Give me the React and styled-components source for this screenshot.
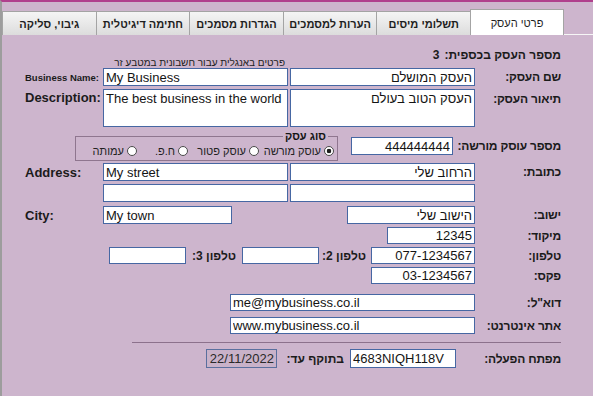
import React from 'react';
import styled, { createGlobalStyle } from 'styled-components';

const GlobalStyle = createGlobalStyle`
  html, body {
    margin: 0;
    padding: 0;
    background: #cdb5cd;
  }
  body {
    font-family: "Liberation Sans", "DejaVu Sans", Arial, sans-serif;
  }
  #root {
    width: 593px;
    height: 396px;
    overflow: hidden;
  }
`;

const Window = styled.div`
  box-sizing: border-box;
  width: 593px;
  height: 396px;
  border-top: 2px solid #b0408d;
  border-left: 2px solid #9d9d9d;
  background: #cdb5cd;
  direction: rtl;
`;

const TabBar = styled.div`
  display: flex;
  align-items: flex-end;
  height: 33px;
  padding: 0 29px 0 1px;
  box-shadow: inset 0 -1px 0 #f6f6f6;
`;

const Tab = styled.div`
  box-sizing: border-box;
  display: flex;
  align-items: center;
  justify-content: center;
  height: ${p => (p.$active ? 26 : 24)}px;
  flex: ${p => (p.$active ? '0 0 94px' : '1 1 0')};
  border: 1px solid #a4a4a4;
  border-bottom: none;
  margin-left: -1px;
  background: ${p => (p.$active ? '#fff' : 'linear-gradient(#f5f5f5, #dcdcdc)')};
  font-size: 11px;
  font-weight: ${p => (p.$active ? 'normal' : 'bold')};
  color: #1e1e1e;
  white-space: nowrap;
  padding-top: ${p => (p.$active ? 0 : 1)}px;
`;

const Panel = styled.div`
  display: flex;
  flex-direction: column;
  padding: 12px 32px 0 0;
`;

const Row = styled.div`
  display: grid;
  grid-template-columns: 84px 185px 185px 78px;
  column-gap: 2px;
  align-items: center;
  margin-top: ${p => p.$mt || 0}px;
  height: ${p => (p.$h ? `${p.$h}px` : 'auto')};
`;

const Span = styled.div`
  grid-column: ${p => p.$from} / -1;
  align-self: stretch;
  display: flex;
  align-items: center;
`;

const Label = styled.div`
  font-size: 12px;
  font-weight: bold;
  letter-spacing: -0.2px;
  color: #1b1b1b;
  white-space: nowrap;
  text-align: right;
  align-self: ${p => (p.$top ? 'start' : 'center')};
  padding-top: ${p => (p.$top ? 3 : 0)}px;
`;

const InlineLabel = styled.div`
  font-size: 12px;
  font-weight: bold;
  color: #1b1b1b;
  white-space: nowrap;
  margin-right: ${p => p.$before || 0}px;
  margin-left: ${p => p.$after || 0}px;
`;

const EnLabel = styled.div`
  direction: ltr;
  text-align: left;
  padding-left: 2px;
  font-size: ${p => p.$size || 13}px;
  font-weight: bold;
  color: #1b1b1b;
  white-space: nowrap;
  align-self: ${p => (p.$top ? 'start' : 'center')};
  padding-top: ${p => (p.$top ? 1 : 0)}px;
`;

const TextBox = styled.input`
  box-sizing: border-box;
  flex: none;
  width: ${p => p.$w || 185}px;
  height: ${p => p.$h || 18}px;
  margin: 0 ${p => p.$before || 0}px 0 0;
  padding: 0 2px;
  border: 1px solid #4667a3;
  background: #fff;
  font-family: "Liberation Sans", "DejaVu Sans", Arial, sans-serif;
  font-size: 13px;
  color: #141414;
  direction: ${p => (p.$ltr ? 'ltr' : 'rtl')};
  justify-self: ${p => (p.$ltr ? 'end' : 'start')};
  outline: none;
`;

const TextArea = styled.textarea`
  box-sizing: border-box;
  width: 185px;
  height: 38px;
  margin: 0;
  padding: 1px 2px;
  border: 1px solid #4667a3;
  background: #fff;
  font-family: "Liberation Sans", "DejaVu Sans", Arial, sans-serif;
  font-size: 13px;
  line-height: 15px;
  color: #141414;
  resize: none;
  overflow: hidden;
  direction: ${p => (p.$ltr ? 'ltr' : 'rtl')};
  outline: none;
`;

const HeadLabel = styled.div`
  grid-column: 1 / 3;
  align-self: start;
  display: flex;
  gap: 5px;
  padding-top: 1px;
  font-size: 12px;
  font-weight: bold;
  color: #1b1b1b;
  white-space: nowrap;
`;

const Note = styled.div`
  grid-column: 3;
  align-self: end;
  justify-self: start;
  padding-right: 3px;
  font-size: 10px;
  color: #222;
  white-space: nowrap;
`;

const TypeBox = styled.fieldset`
  box-sizing: border-box;
  display: flex;
  align-items: center;
  flex: none;
  width: 263px;
  height: 30px;
  margin: 0 13px 0 0;
  padding: 0 3px 1px 0;
  min-width: 0;
  border: 1px solid #8f768f;
`;

const Legend = styled.legend`
  margin-right: 6px;
  padding: 0 2px;
  font-size: 11px;
  line-height: 11px;
  font-weight: bold;
  color: #151515;
`;

const RadioItem = styled.div`
  display: flex;
  align-items: center;
  gap: 3px;
  width: ${p => (p.$w ? `${p.$w}px` : 'auto')};
  flex: none;
  font-size: 11px;
  color: #222;
  white-space: nowrap;
`;

const RadioDot = styled.span`
  box-sizing: border-box;
  width: 10px;
  height: 10px;
  border-radius: 50%;
  border: 1px solid #4a4a4a;
  background: ${p =>
    p.$on ? 'radial-gradient(circle, #1e1e1e 0 2px, #fff 2.6px)' : '#fff'};
`;

const Divider = styled.div`
  align-self: flex-start;
  width: 429px;
  height: 1px;
  margin-top: 8px;
  background: #8c718c;
`;

const DateBox = styled.div`
  box-sizing: border-box;
  flex: none;
  width: 71px;
  height: 19px;
  display: flex;
  align-items: center;
  justify-content: center;
  border: 1px solid #5a6f9e;
  background: #c9b2c9;
  font-size: 13px;
  color: #2a2a2a;
  direction: ltr;
`;

const tabs = ['פרטי העסק', 'תשלומי מיסים', 'הערות למסמכים', 'הגדרות מסמכים', 'חתימה דיגיטלית', 'גיבוי, סליקה'];

const radios = [
  { text: 'עוסק מורשה', w: 75, on: true },
  { text: 'עוסק פטור', w: 71 },
  { text: 'ח.פ.', w: 51 },
  { text: 'עמותה' },
];

const App = () => (
  <>
    <GlobalStyle />
    <Window>
      <TabBar>
        {tabs.map((t, i) => (
          <Tab key={t} $active={i === 0}>{t}</Tab>
        ))}
      </TabBar>

      <Panel>
        <Row $h={21}>
          <HeadLabel>
            <span>מספר העסק בכספית:</span>
            <span>3</span>
          </HeadLabel>
          <Note>פרטים באנגלית עבור חשבונית במטבע זר</Note>
        </Row>

        <Row>
          <Label>שם העסק:</Label>
          <TextBox readOnly value="העסק המושלם" />
          <TextBox $ltr readOnly value="My Business" />
          <EnLabel $size={9.5}>Business Name:</EnLabel>
        </Row>

        <Row $mt={3}>
          <Label $top>תיאור העסק:</Label>
          <TextArea readOnly value="העסק הטוב בעולם" />
          <TextArea $ltr readOnly value="The best business in the world" />
          <EnLabel $top>Description:</EnLabel>
        </Row>

        <Row $mt={4} $h={29}>
          <Label>מספר עוסק מורשה:</Label>
          <Span $from={2}>
            <TextBox $w={102} $before={22} readOnly value="444444444" />
            <TypeBox>
              <Legend>סוג עסק</Legend>
              {radios.map(r => (
                <RadioItem key={r.text} $w={r.w}>
                  <RadioDot $on={r.on} />
                  {r.text}
                </RadioItem>
              ))}
            </TypeBox>
          </Span>
        </Row>

        <Row $mt={3}>
          <Label>כתובת:</Label>
          <TextBox readOnly value="הרחוב שלי" />
          <TextBox $ltr readOnly value="My street" />
          <EnLabel>Address:</EnLabel>
        </Row>

        <Row $mt={3}>
          <span />
          <TextBox readOnly value="" />
          <TextBox $ltr readOnly value="" />
        </Row>

        <Row $mt={4}>
          <Label>ישוב:</Label>
          <TextBox $w={128} readOnly value="הישוב שלי" />
          <TextBox $ltr $w={129} readOnly value="My town" />
          <EnLabel>City:</EnLabel>
        </Row>

        <Row $mt={3}>
          <Label>מיקוד:</Label>
          <TextBox $w={88} $h={17} readOnly value="12345" />
        </Row>

        <Row $mt={3}>
          <Label>טלפון:</Label>
          <Span $from={2}>
            <TextBox $w={104} $h={17} readOnly value="077-1234567" />
            <InlineLabel $before={5} $after={3}>טלפון 2:</InlineLabel>
            <TextBox $w={77} $h={17} readOnly value="" />
            <InlineLabel $before={6} $after={6}>טלפון 3:</InlineLabel>
            <TextBox $w={77} $h={17} readOnly value="" />
          </Span>
        </Row>

        <Row $mt={3}>
          <Label>פקס:</Label>
          <TextBox $w={104} $h={17} readOnly value="03-1234567" />
        </Row>

        <Row $mt={10}>
          <Label>דוא"ל:</Label>
          <Span $from={2}>
            <TextBox $w={245} $h={17} $ltr readOnly value="me@mybusiness.co.il" />
          </Span>
        </Row>

        <Row $mt={6}>
          <Label>אתר אינטרנט:</Label>
          <Span $from={2}>
            <TextBox $w={245} $h={17} $ltr readOnly value="www.mybusiness.co.il" />
          </Span>
        </Row>

        <Divider />

        <Row $mt={6}>
          <Label>מפתח הפעלה:</Label>
          <Span $from={2}>
            <TextBox $w={106} $h={19} $before={19} $ltr readOnly value="4683NIQH118V" />
            <InlineLabel $before={6} $after={9}>בתוקף עד:</InlineLabel>
            <DateBox>22/11/2022</DateBox>
          </Span>
        </Row>
      </Panel>
    </Window>
  </>
);

export default App;
